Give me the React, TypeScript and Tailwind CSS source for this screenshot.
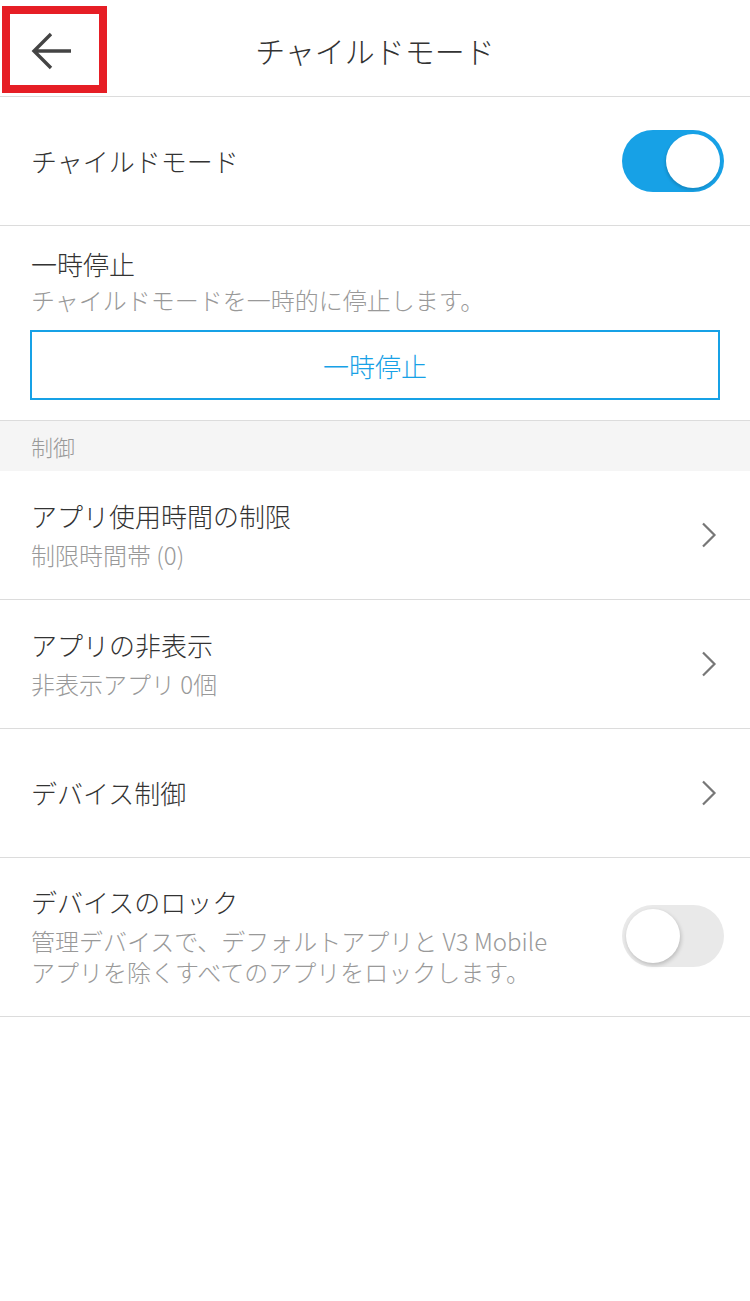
import React, { useState } from 'react';

// Simple switch used for the two toggle rows
const Toggle = ({ on, onChange }: { on: boolean; onChange: () => void }) => (
  <button
    type="button"
    onClick={onChange}
    className={`relative flex h-[62px] w-[102px] shrink-0 items-center rounded-full p-[4px] ${
      on ? 'justify-end bg-[#17a1e6]' : 'justify-start bg-[#e9e9e9]'
    }`}
  >
    <span
      className={`block h-[54px] w-[54px] rounded-full bg-white ${
        on ? 'shadow-[-1px_2px_3px_rgba(0,0,0,0.15)]' : 'shadow-[1px_2px_4px_rgba(0,0,0,0.2)]'
      }`}
    />
  </button>
);

const Chevron = () => (
  <svg width="18" height="28" viewBox="0 0 18 28" className="shrink-0">
    <path d="M3 2.5 L14.5 14 L3 25.5" fill="none" stroke="#777" strokeWidth="2.2" />
  </svg>
);

type LinkRow = { title: string; sub?: string };

const linkRows: LinkRow[] = [
  { title: 'アプリ使用時間の制限', sub: '制限時間帯 (0)' },
  { title: 'アプリの非表示', sub: '非表示アプリ 0個' },
  { title: 'デバイス制御' },
];

export default function App() {
  const [childMode, setChildMode] = useState(true);
  const [lock, setLock] = useState(false);

  return (
    <div
      className="min-h-[1301px] w-[750px] bg-white font-light text-[#333]"
      style={{ fontFamily: '"Noto Sans CJK JP", "Noto Sans", sans-serif' }}
    >
      {/* header */}
      <header className="relative flex h-[97px] items-center justify-center border-b border-[#dcdcdc]">
        <button type="button" className="absolute left-[20px] top-[20px] flex h-[62px] w-[64px] items-center justify-center">
          <svg width="44" height="42" viewBox="0 0 44 42">
            <path d="M41 21 H6 M21 4 L4 21 L21 38" fill="none" stroke="#444" strokeWidth="3.4" />
          </svg>
        </button>
        <div className="pointer-events-none absolute left-[2px] top-[6px] h-[87px] w-[105px] border-[8px] border-[#e61e25]" />
        <h1 className="pt-[4px] text-[30px] leading-none text-[#333]">チャイルドモード</h1>
      </header>

      {/* child mode switch */}
      <div className="flex h-[129px] items-center justify-between border-b border-[#dcdcdc] pl-[31px] pr-[26px]">
        <span className="text-[26px] leading-[36px]">チャイルドモード</span>
        <Toggle on={childMode} onChange={() => setChildMode(!childMode)} />
      </div>

      {/* pause */}
      <div className="border-b border-[#dcdcdc] px-[30px] pb-[20px] pt-[20px]">
        <div className="pl-[1px] text-[26px] leading-[36px]">一時停止</div>
        <div className="pl-[1px] text-[24px] leading-[36px] text-[#999]">チャイルドモードを一時的に停止します。</div>
        <button
          type="button"
          className="mt-[12px] flex h-[70px] w-full items-center justify-center border-2 border-[#17a1e6] text-[26px] font-light text-[#17a1e6]"
        >
          一時停止
        </button>
      </div>

      {/* section label */}
      <div className="flex h-[50px] items-center bg-[#f5f5f5] pl-[31px] text-[22px] text-[#999]">制御</div>

      {linkRows.map((row) => (
        <div
          key={row.title}
          className="flex h-[129px] items-center justify-between border-b border-[#dcdcdc] pl-[31px] pr-[32px]"
        >
          <div className="flex flex-col gap-[3px]">
            <span className="text-[26px] leading-[36px]">{row.title}</span>
            {row.sub && <span className="text-[24px] leading-[36px] text-[#999]">{row.sub}</span>}
          </div>
          <Chevron />
        </div>
      ))}

      {/* device lock */}
      <div className="flex items-center justify-between border-b border-[#dcdcdc] pb-[29px] pl-[31px] pr-[26px] pt-[26px]">
        <div className="flex max-w-[540px] flex-col gap-[5px]">
          <span className="text-[26px] leading-[36px]">デバイスのロック</span>
          <span className="text-[24px] leading-[31px] text-[#999]">
            管理デバイスで、デフォルトアプリと V3 Mobile アプリを除くすべてのアプリをロックします。
          </span>
        </div>
        <Toggle on={lock} onChange={() => setLock(!lock)} />
      </div>
    </div>
  );
}
